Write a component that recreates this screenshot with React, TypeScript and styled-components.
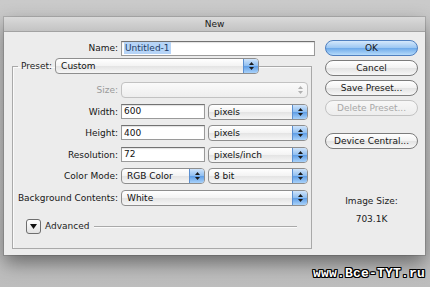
import React from 'react';
import styled, { createGlobalStyle } from 'styled-components';

const GlobalStyle = createGlobalStyle`
  html, body {
    margin: 0;
    padding: 0;
  }
  body {
    width: 430px;
    height: 287px;
    overflow: hidden;
    background: linear-gradient(#cacaca 0%, #c5c5c5 70%, #bdbdbd 100%);
    font-family: "DejaVu Sans", "Liberation Sans", sans-serif;
    color: #1c1c1c;
  }
`;

const Page = styled.div`
  width: 430px;
  height: 287px;
  box-sizing: border-box;
  padding: 17px 5px 0 4px;
  display: flex;
  flex-direction: column;
`;

const Window = styled.div`
  width: 421px;
  height: 238px;
  background: #ececec;
  box-shadow: 0 8px 18px rgba(0, 0, 0, 0.45), 0 0 0 1px rgba(0, 0, 0, 0.12);
  display: flex;
  flex-direction: column;
`;

const TitleBar = styled.div`
  height: 14px;
  border-bottom: 1px solid #a2a2a2;
  background: linear-gradient(#dadada, #c3c3c3);
  text-align: center;
  font-size: 9px;
  line-height: 15px;
  color: #1a1a1a;
`;

const Body = styled.div`
  flex: 1;
  display: flex;
`;

const LeftCol = styled.div`
  width: 311px;
  box-sizing: border-box;
  padding: 8px 0 0 8px;
  display: flex;
  flex-direction: column;
`;

const RightCol = styled.div`
  width: 93px;
  margin-left: 10px;
  padding-top: 8px;
  display: flex;
  flex-direction: column;
`;

const FormRow = styled.div<{ $label: number }>`
  display: grid;
  grid-template-columns: ${p => p.$label}px 1fr;
  column-gap: 3px;
  align-items: center;
  height: 16px;
`;

const Label = styled.span<{ $dim?: boolean }>`
  text-align: right;
  white-space: nowrap;
  font-size: 9px;
  color: ${p => (p.$dim ? '#9a9a9a' : '#161616')};
`;

const Pair = styled.div`
  display: grid;
  grid-template-columns: 84px 1fr;
  column-gap: 3px;
`;

const TextField = styled.div`
  height: 15px;
  box-sizing: border-box;
  border: 1px solid #9a9a9a;
  border-top-color: #727272;
  background: #fff;
  box-shadow: inset 0 1px 1px rgba(0, 0, 0, 0.12);
  padding-left: 2px;
  display: flex;
  align-items: center;
  font-size: 9px;
  color: #111;
  white-space: nowrap;
`;

const Selected = styled.span`
  background: #b6d4f7;
  padding: 1px 1px;
  color: #1f3d66;
`;

const SelectBox = styled.div<{ $disabled?: boolean }>`
  height: 16px;
  box-sizing: border-box;
  border: 1px solid ${p => (p.$disabled ? '#c2c2c2' : '#8e8e8e')};
  border-radius: 4px;
  background: ${p =>
    p.$disabled
      ? 'linear-gradient(#fafafa, #eeeeee)'
      : 'linear-gradient(#ffffff, #f3f3f3 50%, #e4e4e4 52%, #f6f6f6)'};
  display: flex;
  align-items: center;
  font-size: 9px;
  color: #111;
  overflow: hidden;
`;

const SelectText = styled.span`
  flex: 1;
  padding-left: 5px;
  white-space: nowrap;
`;

const Stepper = styled.span<{ $disabled?: boolean }>`
  width: 14px;
  height: 100%;
  display: flex;
  align-items: center;
  justify-content: center;
  border-left: 1px solid ${p => (p.$disabled ? 'transparent' : '#5b8fd0')};
  background: ${p =>
    p.$disabled
      ? 'transparent'
      : 'linear-gradient(#cfe4fb, #8dbdf0 50%, #5f9ee6 52%, #a9d2fa)'};
`;

const PresetSlot = styled.div`
  width: 204px;
`;

const Group = styled.fieldset`
  margin: 2px 0 0 0;
  width: 300px;
  box-sizing: border-box;
  min-width: 0;
  border: 1px solid #a9a9a9;
  box-shadow: inset 1px 1px 0 #fafafa;
  padding: 8px 3px 14px 0;
`;

const Legend = styled.legend`
  margin-left: 5px;
  padding: 0 0 0 3px;
  display: flex;
  align-items: center;
  height: 16px;
`;

const PresetLabel = styled.span`
  font-size: 9px;
  margin-right: 3px;
`;

const Rows = styled.div`
  display: flex;
  flex-direction: column;
  gap: 5.6px;
`;

const AdvancedRow = styled.div`
  margin-top: 13px;
  padding: 0 11px 0 13px;
  display: flex;
  align-items: center;
  height: 15px;
`;

const Disclosure = styled.span`
  width: 15px;
  height: 15px;
  box-sizing: border-box;
  border: 1px solid #6e6e6e;
  border-radius: 3px;
  background: linear-gradient(#ffffff, #e2e2e2);
  display: flex;
  align-items: center;
  justify-content: center;
`;

const AdvancedText = styled.span`
  font-size: 9px;
  margin-left: 4px;
`;

const Rule = styled.span`
  flex: 1;
  height: 1px;
  margin-left: 5px;
  background: #a9a9a9;
  box-shadow: 0 1px 0 #fafafa;
`;

const PillButton = styled.div<{ $primary?: boolean; $disabled?: boolean }>`
  width: 100%;
  height: 16px;
  box-sizing: border-box;
  border-radius: 8px;
  border: 1px solid ${p => (p.$primary ? '#4f7fbf' : p.$disabled ? '#c3c3c3' : '#7c7c7c')};
  background: ${p =>
    p.$primary
      ? 'linear-gradient(#d4e8fc, #9ac6f2 50%, #6eaaea 52%, #b5dbfb)'
      : p.$disabled
      ? 'linear-gradient(#f7f7f7, #ededed)'
      : 'linear-gradient(#ffffff, #f2f2f2 50%, #e3e3e3 52%, #f7f7f7)'};
  display: flex;
  align-items: center;
  justify-content: center;
  font-size: 9px;
  color: ${p => (p.$disabled ? '#a8a8a8' : '#161616')};
  white-space: nowrap;
  & + & {
    margin-top: 4px;
  }
`;

const Spacer = styled.div<{ $h: number }>`
  height: ${p => p.$h}px;
`;

const SizeInfo = styled.div`
  margin-top: 46px;
  display: flex;
  flex-direction: column;
  align-items: center;
  gap: 6px;
  font-size: 9px;
  line-height: 12px;
`;

const Watermark = styled.div`
  margin-top: 11px;
  display: flex;
  justify-content: flex-end;
  font-family: "Liberation Mono", "DejaVu Sans Mono", monospace;
  font-weight: bold;
  font-size: 13px;
  color: #fff;
  letter-spacing: 0.2px;
  text-shadow: 1px 0 0 #000, -1px 0 0 #000, 0 1px 0 #000, 0 -1px 0 #000,
    1px 1px 0 #000, -1px -1px 0 #000, 1px -1px 0 #000, -1px 1px 0 #000;
`;

const Arrows = ({ color = '#1a1a1a' }: { color?: string }) => (
  <svg width="7" height="10" viewBox="0 0 7 10">
    <path d="M3.5 1 L6 4 L1 4 Z" fill={color} />
    <path d="M3.5 9 L6 6 L1 6 Z" fill={color} />
  </svg>
);

const Select = ({ value, disabled }: { value?: string; disabled?: boolean }) => (
  <SelectBox $disabled={disabled}>
    <SelectText>{value}</SelectText>
    <Stepper $disabled={disabled}>
      <Arrows color={disabled ? '#b0b0b0' : '#1a1a1a'} />
    </Stepper>
  </SelectBox>
);

const App: React.FC = () => {
  return (
    <>
      <GlobalStyle />
      <Page>
        <Window>
          <TitleBar>New</TitleBar>
          <Body>
            <LeftCol>
              <FormRow $label={106}>
                <Label>Name:</Label>
                <TextField>
                  <Selected>Untitled-1</Selected>
                </TextField>
              </FormRow>

              <Group>
                <Legend>
                  <PresetLabel>Preset:</PresetLabel>
                  <PresetSlot>
                    <Select value="Custom" />
                  </PresetSlot>
                </Legend>
                <Rows>
                  <FormRow $label={105}>
                    <Label $dim>Size:</Label>
                    <Select disabled />
                  </FormRow>
                  <FormRow $label={105}>
                    <Label>Width:</Label>
                    <Pair>
                      <TextField>600</TextField>
                      <Select value="pixels" />
                    </Pair>
                  </FormRow>
                  <FormRow $label={105}>
                    <Label>Height:</Label>
                    <Pair>
                      <TextField>400</TextField>
                      <Select value="pixels" />
                    </Pair>
                  </FormRow>
                  <FormRow $label={105}>
                    <Label>Resolution:</Label>
                    <Pair>
                      <TextField>72</TextField>
                      <Select value="pixels/inch" />
                    </Pair>
                  </FormRow>
                  <FormRow $label={105}>
                    <Label>Color Mode:</Label>
                    <Pair>
                      <Select value="RGB Color" />
                      <Select value="8 bit" />
                    </Pair>
                  </FormRow>
                  <FormRow $label={105}>
                    <Label>Background Contents:</Label>
                    <Select value="White" />
                  </FormRow>
                </Rows>
                <AdvancedRow>
                  <Disclosure>
                    <svg width="7" height="5" viewBox="0 0 7 5">
                      <path d="M0 0 L7 0 L3.5 5 Z" fill="#111" />
                    </svg>
                  </Disclosure>
                  <AdvancedText>Advanced</AdvancedText>
                  <Rule />
                </AdvancedRow>
              </Group>
            </LeftCol>

            <RightCol>
              <PillButton $primary>OK</PillButton>
              <PillButton>Cancel</PillButton>
              <PillButton>Save Preset...</PillButton>
              <PillButton $disabled>Delete Preset...</PillButton>
              <Spacer $h={17} />
              <PillButton>Device Central...</PillButton>
              <SizeInfo>
                <span>Image Size:</span>
                <span>703.1K</span>
              </SizeInfo>
            </RightCol>
          </Body>
        </Window>
        <Watermark>www.Bce-TYT.ru</Watermark>
      </Page>
    </>
  );
};

export default App;
